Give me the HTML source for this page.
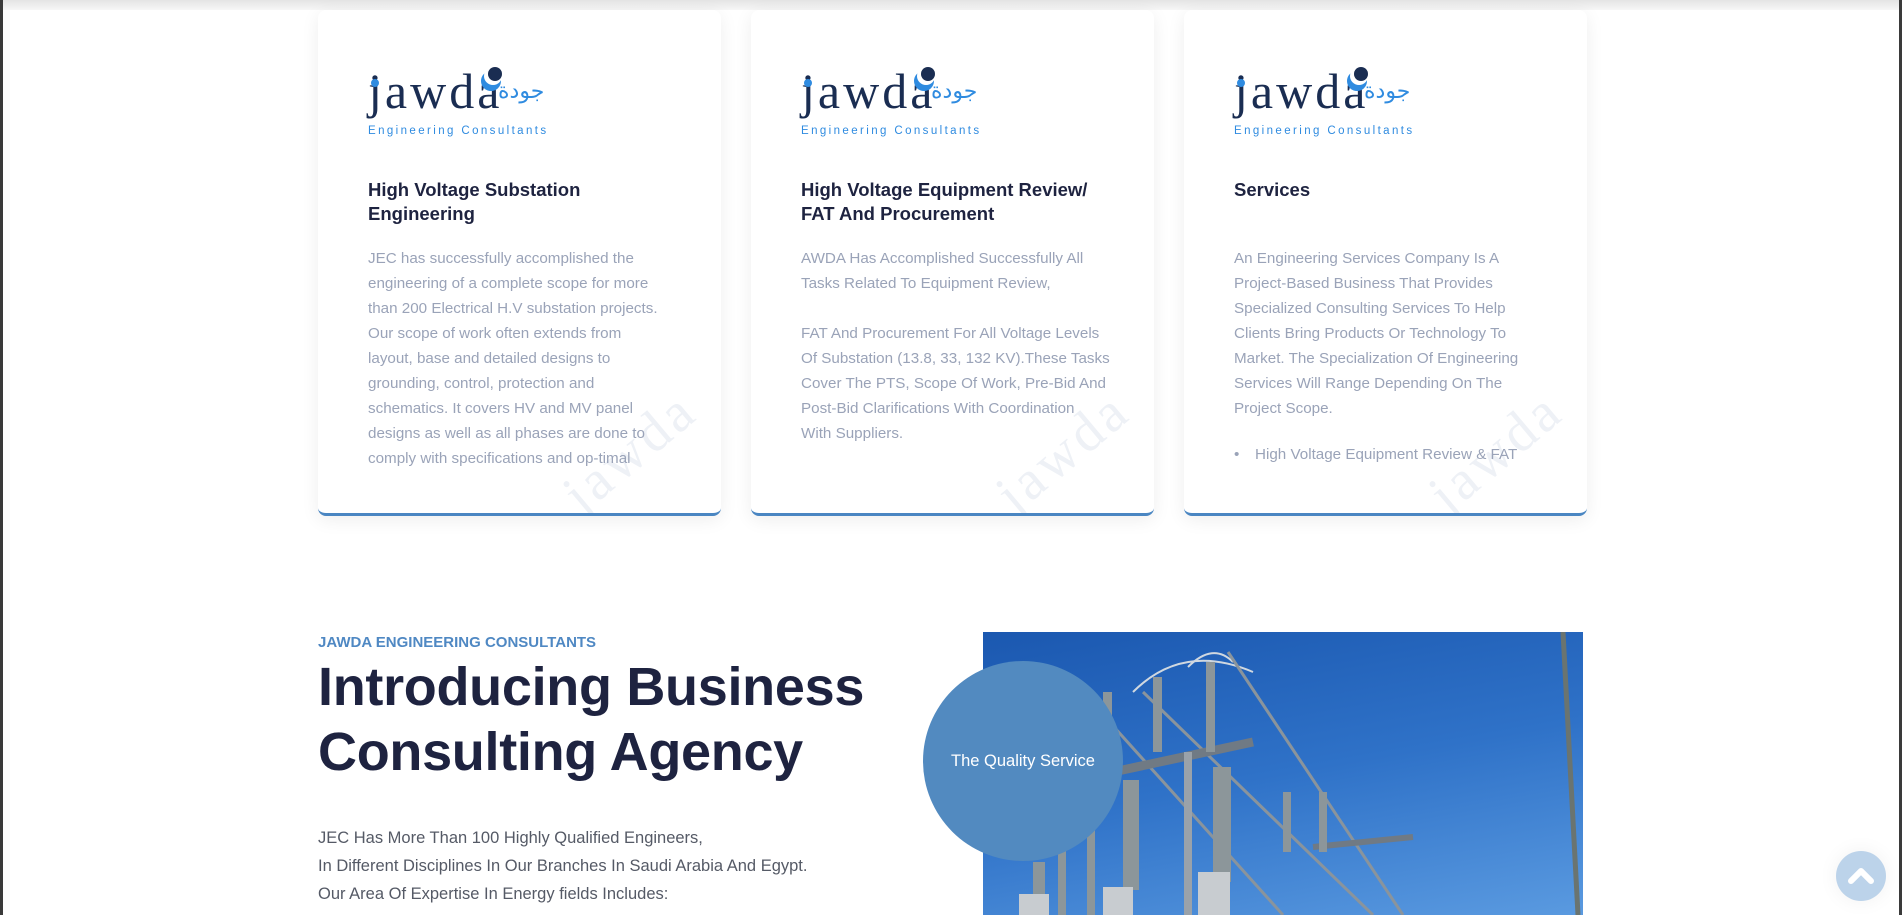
<!DOCTYPE html>
<html><head><meta charset="utf-8">
<style>
*{margin:0;padding:0;box-sizing:border-box}
body{width:1902px;height:915px;overflow:hidden;background:#fff;font-family:"Liberation Sans",sans-serif;position:relative}
.edgeL{position:absolute;left:0;top:0;width:3px;height:915px;background:#3a3a3a}
.edgeR{position:absolute;right:0;top:0;width:3px;height:915px;background:#3a3a3a}
.topbar{position:absolute;left:3px;right:3px;top:0;height:10px;background:linear-gradient(#e4e4e4,#f7f7f7)}
.card{position:absolute;top:10px;width:403px;height:506px;background:#fff;border-radius:8px;box-shadow:0 4px 18px rgba(0,0,0,.07);border-bottom:3px solid #4a86c2;overflow:hidden}
.logo{position:absolute;left:50px;top:51px;width:200px;height:90px}
.logo .jw{position:absolute;left:0;top:0;font-family:"Liberation Serif",serif;font-size:50px;color:#1a2d52;letter-spacing:3px;line-height:60px}
.logo .ar{position:absolute;left:130px;top:16px;font-family:"DejaVu Sans",sans-serif;font-size:22px;color:#2f8be0;line-height:30px}
.logo .en{position:absolute;left:0;top:64px;font-size:11.5px;color:#2f8be0;letter-spacing:2.4px;white-space:nowrap}
.logo .c1{position:absolute;left:113px;top:10px;width:20px;height:20px;border-radius:50%;background:#2f8be0}
.logo .c2{position:absolute;left:120px;top:6px;width:14px;height:14px;border-radius:50%;background:#1a2d52;box-shadow:-2px 2px 0 2px #fff}
.logo .jd{position:absolute;left:3px;top:18px;width:8px;height:8px;border-radius:50%;background:#2f8be0}
.card h3{position:absolute;left:50px;top:168px;width:330px;font-size:18.5px;line-height:24px;color:#1e2340;font-weight:bold}
.card .tx{position:absolute;left:50px;top:236px;width:340px;height:230px;overflow:hidden;font-size:15.2px;line-height:25px;color:#9aa3b8;white-space:nowrap}
.wm{position:absolute;left:235px;top:410px;transform:rotate(-40deg);font-family:"Liberation Serif",serif;font-size:56px;color:#eef1f6;letter-spacing:4px}
.label{position:absolute;left:318px;top:634px;font-size:15px;font-weight:bold;color:#4f88c3}
h1{position:absolute;left:318px;top:655px;font-size:54px;line-height:65px;color:#1e2340;font-weight:bold;letter-spacing:-0.3px}
.para{position:absolute;left:318px;top:824px;font-size:16.5px;line-height:28px;color:#555a66}
.img{position:absolute;left:983px;top:632px;width:600px;height:283px;overflow:hidden;background:linear-gradient(170deg,#1b58b0 0%,#2f72c8 50%,#5a9ae0 100%)}
.circle{position:absolute;left:923px;top:661px;width:200px;height:200px;border-radius:50%;background:#528ac0;color:#fff;font-size:16.5px;display:flex;align-items:center;justify-content:center}
.up{position:absolute;left:1836px;top:851px;width:50px;height:50px;border-radius:50%;background:#bcd3ea;box-shadow:0 0 20px rgba(0,0,0,.06)}
</style></head><body>
<div class="topbar"></div>

<div class="card" style="left:318px">
<div class="wm">jawda</div>
<div class="logo"><div class="jw">jawda</div><div class="jd"></div><div class="c1"></div><div class="c2"></div><div class="ar">جودة</div><div class="en">Engineering Consultants</div></div>
<h3>High Voltage Substation<br>Engineering</h3>
<div class="tx">JEC has successfully accomplished the<br>engineering of a complete scope for more<br>than 200 Electrical H.V substation projects.<br>Our scope of work often extends from<br>layout, base and detailed designs to<br>grounding, control, protection and<br>schematics. It covers HV and MV panel<br>designs as well as all phases are done to<br>comply with specifications and op-timal</div>
</div>

<div class="card" style="left:751px">
<div class="wm">jawda</div>
<div class="logo"><div class="jw">jawda</div><div class="jd"></div><div class="c1"></div><div class="c2"></div><div class="ar">جودة</div><div class="en">Engineering Consultants</div></div>
<h3>High Voltage Equipment Review/<br>FAT And Procurement</h3>
<div class="tx">AWDA Has Accomplished Successfully All<br>Tasks Related To Equipment Review,<br><br>FAT And Procurement For All Voltage Levels<br>Of Substation (13.8, 33, 132 KV).These Tasks<br>Cover The PTS, Scope Of Work, Pre-Bid And<br>Post-Bid Clarifications With Coordination<br>With Suppliers.</div>
</div>

<div class="card" style="left:1184px">
<div class="wm">jawda</div>
<div class="logo"><div class="jw">jawda</div><div class="jd"></div><div class="c1"></div><div class="c2"></div><div class="ar">جودة</div><div class="en">Engineering Consultants</div></div>
<h3>Services</h3>
<div class="tx">An Engineering Services Company Is A<br>Project-Based Business That Provides<br>Specialized Consulting Services To Help<br>Clients Bring Products Or Technology To<br>Market. The Specialization Of Engineering<br>Services Will Range Depending On The<br>Project Scope.<div style="margin-top:21px;padding-left:21px;position:relative"><span style="position:absolute;left:0;top:0">•</span>High Voltage Equipment Review &amp; FAT</div></div>
</div>

<div class="label">JAWDA ENGINEERING CONSULTANTS</div>
<h1>Introducing Business<br>Consulting Agency</h1>
<div class="para">JEC Has More Than 100 Highly Qualified Engineers,<br>In Different Disciplines In Our Branches In Saudi Arabia And Egypt.<br>Our Area Of Expertise In Energy fields Includes:</div>

<div class="img">
<svg width="600" height="283" viewBox="0 0 600 283">
<g stroke="#8a949c" fill="none">
<path d="M150 60 Q200 10 270 40" stroke="#d0d8e0" stroke-width="2"/>
<path d="M205 35 Q230 10 250 30" stroke="#d0d8e0" stroke-width="2"/>
<path d="M245 20 L420 283" stroke-width="3"/>
<path d="M160 60 L390 283" stroke-width="3"/>
<path d="M95 55 L300 283" stroke-width="3"/>
<path d="M580 0 L595 283" stroke="#6a7470" stroke-width="5"/>
<path d="M130 140 L270 110" stroke="#707a84" stroke-width="9"/>
<path d="M205 120 L205 283" stroke="#9aa2aa" stroke-width="8"/>
<path d="M330 215 L430 205" stroke="#707a84" stroke-width="6"/>
</g>
<g fill="#8c969a">
<rect x="120" y="60" width="9" height="75"/><rect x="170" y="45" width="9" height="75"/><rect x="223" y="30" width="9" height="90"/>
<rect x="140" y="148" width="16" height="110"/><rect x="230" y="135" width="18" height="115"/>
<rect x="50" y="230" width="12" height="53"/><rect x="75" y="205" width="8" height="78"/><rect x="104" y="190" width="8" height="93"/>
<rect x="300" y="160" width="8" height="60"/><rect x="336" y="160" width="8" height="60"/>
</g>
<g fill="#c8ccd0"><rect x="36" y="262" width="30" height="21"/><rect x="120" y="255" width="30" height="28"/><rect x="215" y="240" width="32" height="43"/></g>
</svg>
</div>
<div class="circle">The Quality Service</div>

<div class="up"><svg width="50" height="50" viewBox="0 0 50 50"><path d="M15 30 L25 20 L35 30" stroke="#fff" stroke-width="6" stroke-linecap="round" stroke-linejoin="round" fill="none"/></svg></div>

<div class="edgeL"></div><div class="edgeR"></div>
</body></html>
